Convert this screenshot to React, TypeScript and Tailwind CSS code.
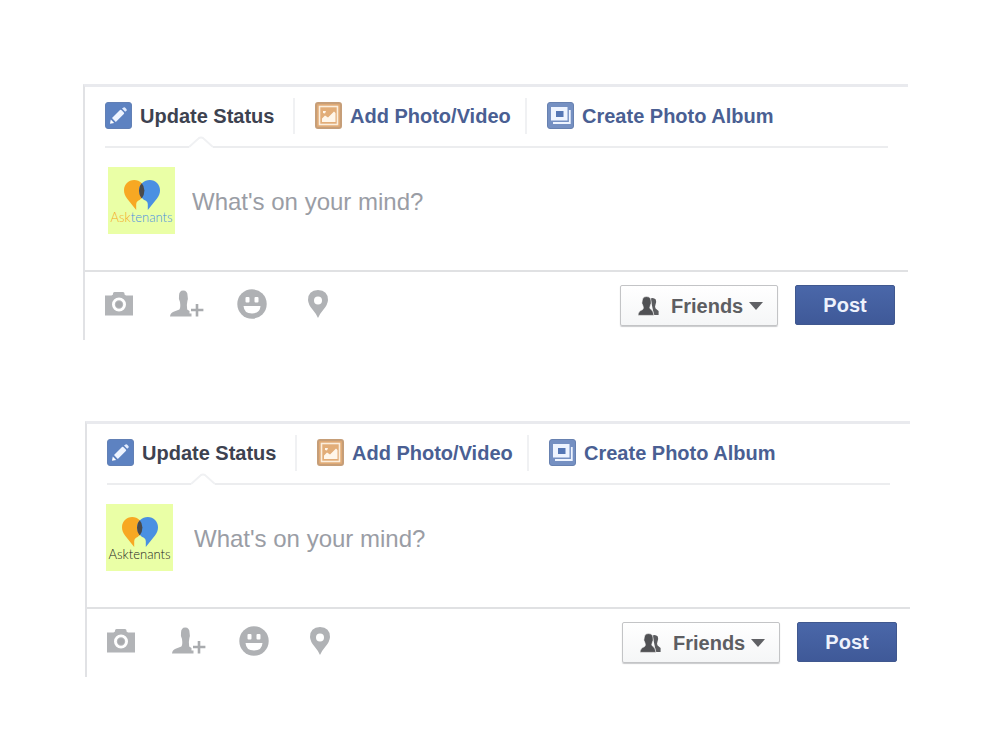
import type { ReactNode } from "react";
import clsx from "clsx";

interface ComposerProps {
  id: string;
  cardClass: string;
  avatarClass: string;
  twoTone?: boolean;
}

interface TabItem {
  label: string;
  icon: ReactNode;
  width: string;
}

function PencilIcon() {
  return (
    <svg className="size-[27px] shrink-0" viewBox="0 0 27 27" aria-hidden="true">
      <rect x="0.5" y="0.5" width="26" height="26" rx="2.5" fill="#5d82c1" stroke="#6280b5" />
      <path d="M5 21.8 5.8 17.6 9.2 21Z" fill="#fff" />
      <path d="M7 16 15 8Q15.8 7.4 16.6 8.2L18.8 10.4Q19.6 11.2 18.8 12L10.8 20Z" fill="#eef4ff" />
      <path d="M17 6.6 18.6 5.4Q19.4 5 20 5.6L21.4 7Q22 7.8 21.6 8.4L20.2 9.8Z" fill="#e2ecff" />
    </svg>
  );
}

function PhotoIcon() {
  return (
    <svg className="size-[27px] shrink-0" viewBox="0 0 27 27" aria-hidden="true">
      <rect x="1" y="1" width="25" height="25" rx="2" fill="#dfaa76" stroke="#c69e78" strokeWidth="2" />
      <rect x="4.5" y="4.5" width="18" height="18" fill="#e2ad78" stroke="#fbeedd" strokeWidth="1.6" />
      <path d="M7 20V16.5L10 13.5L13 15.5L19 9.5L20.5 11V20Z" fill="#fff6ea" />
      <path d="M8 9H11L10 11.5L8 11Z" fill="#fff6ea" />
    </svg>
  );
}

function AlbumIcon() {
  return (
    <svg className="size-[27px] shrink-0" viewBox="0 0 27 27" aria-hidden="true">
      <rect x="0.5" y="0.5" width="26" height="26" rx="2.5" fill="#7590c2" stroke="#6781b0" />
      <path d="M22.8 8V21H6" fill="none" stroke="#eef4ff" strokeWidth="1.8" />
      <rect x="4" y="5" width="16.5" height="13.5" fill="#eef4ff" />
      <rect x="9" y="9" width="7.5" height="6" fill="#5577b5" />
    </svg>
  );
}

function CameraIcon() {
  return (
    <svg className="h-[25px] w-7" viewBox="0 0 28 25" aria-hidden="true">
      <path d="M0 4.5H6.5L8 3.5V2.5Q8 1 9.5 1H18Q19.5 1 19.5 2.5V3.5L21 4.5H28V24.5H0Z" fill="#b2b4b7" />
      <circle cx="14" cy="13.5" r="5.6" fill="#b8babd" stroke="#fff" strokeWidth="2.8" />
      <circle cx="14" cy="13.5" r="3.2" fill="#a8aaad" />
    </svg>
  );
}

function TagIcon() {
  return (
    <svg className="h-[27px] w-[34px]" viewBox="0 0 34 27" aria-hidden="true">
      <path d="M9 6Q9 .5 13.2 .5Q17.6 .5 17.6 6Q18.2 8.5 17.4 11Q16.4 15 17.2 19.5L19.5 21V23.5H21.5V26.5H0Q.4 23 3.6 21.8L9.4 19.6Q10.8 17.5 10 12Q8.4 9 9 6Z" fill="#afb1b4" />
      <path d="M27 14V26.5M21 20H33.4" stroke="#a9abae" strokeWidth="2.6" />
    </svg>
  );
}

function SmileIcon() {
  return (
    <svg className="size-[30px]" viewBox="0 0 30 30" aria-hidden="true">
      <circle cx="15" cy="15" r="14.7" fill="#afb1b4" />
      <rect x="8.5" y="8" width="4" height="5.5" rx="1" fill="#fff" />
      <rect x="17.5" y="8" width="4" height="5.5" rx="1" fill="#fff" />
      <path d="M6.5 17H23.5Q23 24.5 15 24.5Q7 24.5 6.5 17Z" fill="#fff" />
    </svg>
  );
}

function PinIcon() {
  return (
    <svg className="h-7 w-5" viewBox="0 0 20 28" aria-hidden="true">
      <path d="M10 0Q20 0.4 20 10Q19.6 15 15.5 19.5Q12 23.5 10 28Q8 23.5 4.5 19.5Q.4 15 0 10Q0 .4 10 0Z" fill="#b0b2b5" />
      <circle cx="10" cy="10.5" r="4" fill="#fff" />
    </svg>
  );
}

function FriendsIcon() {
  return (
    <svg className="h-5 w-[21px] shrink-0" viewBox="0 0 21 20" aria-hidden="true">
      <path d="M12.5 2.5Q15.5 1 17.8 3.6Q18.8 6 17.4 9Q16.6 11 17.6 12.4L20.6 15V19H16Z" fill="#5b5c5f" />
      <path d="M4.2 4.8Q4.6 .6 8.4 .6Q12.8 .6 13 4.8Q13.8 7 12.2 10Q11.2 12 12.4 13Q15.4 14.4 16 19.4H0Q0 15.4 4.6 13.6Q6 12.6 5 10Q3 7 4.2 4.8Z" fill="#505154" stroke="#fff" strokeWidth="0.6" />
    </svg>
  );
}

const tabs: TabItem[] = [
  { label: "Update Status", icon: <PencilIcon />, width: "w-[188px]" },
  { label: "Add Photo/Video", icon: <PhotoIcon />, width: "w-[232px] border-l-2 pl-5" },
  { label: "Create Photo Album", icon: <AlbumIcon />, width: "border-l-2 pl-5" },
];

const tools = [
  { label: "Add photos", icon: <CameraIcon />, width: "w-[65px]" },
  { label: "Tag people", icon: <TagIcon />, width: "w-[67px]" },
  { label: "Add a feeling", icon: <SmileIcon />, width: "w-[71px]" },
  { label: "Check in", icon: <PinIcon />, width: "w-5" },
];

function Avatar({ twoTone, className }: { twoTone?: boolean; className: string }) {
  return (
    <div className={clsx("flex size-[67px] shrink-0 flex-col items-center bg-[#eaffa6] pt-[13px]", className)}>
      <svg className="h-[30px] w-9" viewBox="0 0 36 30" aria-hidden="true">
        <path d="M10.2 0C16 0 20.4 4.5 20.4 10.2C20.4 15 17.5 18.8 14.5 20.6Q12.2 22 12.2 24V30L3 18.5C1 16 0 13.2 0 10.2C0 4.5 4.4 0 10.2 0Z" fill="#f7a823" />
        <path d="M25.8 0C31.6 0 36 4.5 36 10.2C36 13.2 35 16 33 18.5L23.8 30V24Q23.8 22 21.5 20.6C18 18.8 15 15 15 10.2C15 4.5 20 0 25.8 0Z" fill="#4a90e2" />
        <path d="M17.7 3.2Q20.4 6 20.4 10.4Q20.4 15.2 17.7 18.4Q15 15.2 15 10.4Q15 6 17.7 3.2Z" fill="#4a4a4a" />
      </svg>
      <div className="font-['Lato',sans-serif] text-[13px] leading-[14px] font-light">
        <span className={twoTone ? "text-[#f7a823]" : "text-[#222222]"}>Ask</span>
        <span className={twoTone ? "text-[#4a90e2]" : "text-[#222222]"}>tenants</span>
      </div>
    </div>
  );
}

function Composer({ id, cardClass, avatarClass, twoTone }: ComposerProps) {
  return (
    <form
      className={clsx("border-t-[3px] border-l-2 border-t-[#e9eaee] border-l-[#e1e2e5] bg-white", cardClass)}
      onSubmit={(e) => e.preventDefault()}
    >
      {/* Tabs */}
      <div className="relative mx-5 flex h-[61px] items-center border-b-2 border-[#ecedef] pb-0.5">
        {tabs.map((tab, i) => (
          <button
            key={tab.label}
            type="button"
            className={clsx(
              "flex h-9 shrink-0 items-center gap-2 border-[#f0f1f3] text-xl font-bold whitespace-nowrap",
              tab.width,
              i === 0 ? "text-[#3d4250]" : "text-[#4a5f93]"
            )}
          >
            {tab.icon}
            {tab.label}
          </button>
        ))}
        <svg className="absolute -bottom-0.5 left-[84px] h-3 w-6" viewBox="0 0 24 12" aria-hidden="true">
          <path d="M0 12V11L12 1L24 11V12Z" fill="#fff" />
          <path d="M0 11L10 2Q12 1 14 2L24 11" fill="none" stroke="#f0f1f3" strokeWidth="2" />
        </svg>
      </div>

      {/* Message */}
      <div className="flex h-[122px] items-start pt-[19px]">
        <div className="w-[107px] shrink-0">
          <Avatar twoTone={twoTone} className={avatarClass} />
        </div>
        <input
          id={`${id}-message`}
          type="text"
          aria-label="Status message"
          placeholder="What's on your mind?"
          className="mt-[17px] h-9 min-w-0 flex-1 bg-transparent text-2xl outline-none placeholder:text-[#9a9da5]"
        />
      </div>

      {/* Footer */}
      <div className="flex h-[70px] items-start border-t-2 border-[#e0e1e3] pt-[13px] pr-[13px] pl-5">
        <div className="flex h-[37px] items-center">
          {tools.map((tool) => (
            <button key={tool.label} type="button" aria-label={tool.label} className={tool.width}>
              {tool.icon}
            </button>
          ))}
        </div>
        <label
          htmlFor={`${id}-audience`}
          className="ml-auto flex h-[41px] w-[158px] items-center rounded-xs border border-[#c3c4c6] bg-linear-to-b from-white to-[#f5f6f7] pl-[17px] shadow-[0_1px_1px_#c9cacc]"
        >
          <FriendsIcon />
          <select
            id={`${id}-audience`}
            aria-label="Audience"
            className="ml-3 w-[78px] appearance-none bg-transparent text-xl font-bold text-[#5d5e62] outline-none"
          >
            <option>Friends</option>
            <option>Public</option>
          </select>
          <svg className="h-2 w-3.5 shrink-0" viewBox="0 0 14 8" aria-hidden="true">
            <path d="M0 0H14L7 8Z" fill="#606165" />
          </svg>
        </label>
        <button
          type="submit"
          className="ml-[17px] h-10 w-[100px] rounded-xs border border-[#40588f] bg-linear-to-b from-[#4a67a9] to-[#3f5998] text-xl font-bold text-[#eef2fc]"
        >
          Post
        </button>
      </div>
    </form>
  );
}

export default function App() {
  return (
    <main className="flex min-h-screen flex-col gap-[81px] bg-white pt-[84px] font-['Liberation_Sans',Arial,sans-serif]">
      <Composer id="first" cardClass="ml-[83px] mr-[92px]" avatarClass="ml-[23px]" twoTone />
      <Composer id="second" cardClass="ml-[85px] mr-[90px]" avatarClass="ml-[19px]" />
    </main>
  );
}
